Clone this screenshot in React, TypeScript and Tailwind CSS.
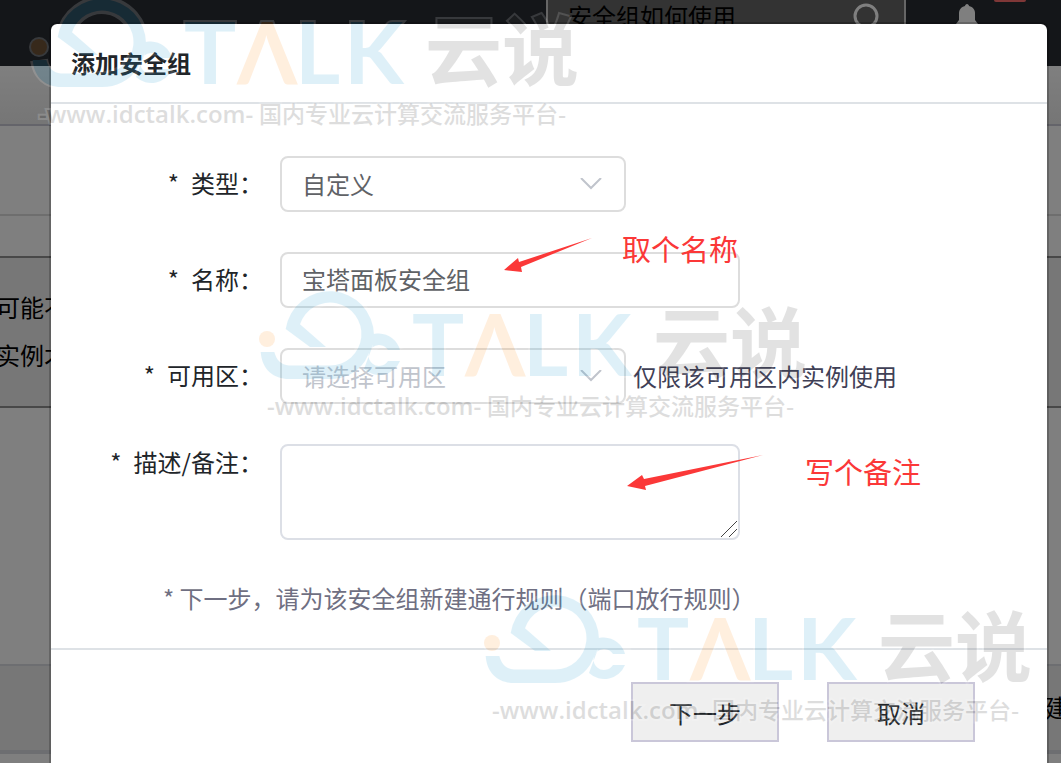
import { useState } from 'react'
import type { ReactNode } from 'react'

const FIELD = 'rounded-lg border-2 border-[#dddddd] bg-white text-2xl text-[#606266] outline-none'

function Watermark({ className }: { className: string }) {
  return (
    <svg
      aria-hidden="true"
      viewBox="0 0 560 140"
      className={`pointer-events-none absolute h-[140px] w-[560px] opacity-15 ${className}`}
    >
      {/* Cloud mark: white halo first, colour on top */}
      <g fill="none" stroke="#ffffff">
        <path d="M12 67C14 80 22 87 34 87H75A37.500 37.500 0 1 0 38 43" strokeWidth="18" />
        <path d="M144 65A17 17 0 1 0 144 77" strokeWidth="17" />
        <circle cx="12" cy="54" r="8" strokeWidth="4" />
      </g>
      <path
        d="M5.700 67H19.300C21.500 75 26 80 34 80.500H75A31.500 31.500 0 1 0 45 39.300L71 62H55L30.700 44A44.400 44.400 0 0 1 119 50L118 60L110 76C102 88 89 94 75 94H34C19 94 7 85 5.700 67Z"
        fill="#2aa2d7"
      />
      <path
        d="M145 65A22.500 22.500 0 0 0 124 48.500C121 48.500 118.500 49 118 49L118 60L109 84A22.500 22.500 0 0 0 145 76H133A10.500 10.500 0 1 1 133 65Z"
        fill="#2aa2d7"
      />
      <circle cx="12" cy="54" r="8" fill="#ff9628" />

      <g stroke="#ffffff" strokeWidth="4" paintOrder="stroke">
        <g fontFamily="Lato, sans-serif" fontSize="87" fontWeight="700" fill="#2aa2d7">
          <text x="157" y="91">T</text>
          <text x="210" y="91" fill="#ff9628">Λ</text>
          <text x="268" y="91">L</text>
          <text x="317" y="91">K</text>
        </g>
        <text x="398" y="87" fontFamily="'Noto Sans CJK SC', sans-serif" fontSize="77" fontWeight="700" fill="#444444">
          云说
        </text>
        <g fontSize="23" fill="#222222">
          <text x="12" y="130" fontFamily="'Open Sans', sans-serif" fontSize="24" fontWeight="600">
            -www.idctalk.com-
          </text>
          <text x="232" y="130" fontFamily="'Noto Sans CJK SC', sans-serif" fontWeight="500">
            国内专业云计算交流服务平台-
          </text>
        </g>
      </g>
    </svg>
  )
}

function Row({ label, htmlFor, children }: { label: string; htmlFor: string; children: ReactNode }) {
  return (
    <div className="flex items-start gap-[17px]">
      <label htmlFor={htmlFor} className="flex h-[54px] w-[212px] shrink-0 items-center justify-end gap-3 text-[#212529]">
        <span>*</span>
        <span>{label}：</span>
      </label>
      {children}
    </div>
  )
}

function Chevron() {
  return (
    <svg
      viewBox="0 0 22 12"
      fill="none"
      stroke="#c0c4cc"
      strokeWidth="2"
      className="pointer-events-none absolute top-[22px] right-6 h-3 w-[22px]"
    >
      <path d="M1 0L11 10L21 0" />
    </svg>
  )
}

function PageBehind() {
  return (
    <div className="flex min-h-screen flex-col bg-white text-2xl text-black">
      <header className="flex h-[66px] items-start bg-[#282c32]">
        <div className="mr-12 ml-auto flex h-[66px] w-[360px] items-start justify-between border-x-2 border-[#cccccc] bg-[#666666] pr-6 pl-5">
          <span className="leading-[34px]">安全组如何使用</span>
          <svg viewBox="0 0 28 36" fill="none" stroke="#ffffff" strokeWidth="3" className="h-9 w-7">
            <circle cx="14" cy="16" r="11" />
            <path d="M21 25L27 33" />
          </svg>
        </div>
        <svg viewBox="0 0 26 32" fill="#ffffff" className="h-8 w-[26px]">
          <path d="M13 4C14 4 15 5 15 6C19 7 21 10 21 13V20L24 24V26H2V24L5 20V13C5 10 7 7 11 6C11 5 12 4 13 4Z" />
        </svg>
        <span className="mr-[35px] ml-[14px] h-0.5 w-8 rounded-b-full bg-[#ff6f6f]" />
      </header>
      <div className="h-[60px] border-b-2 border-[#c8c8d4] bg-linear-to-b from-white to-[#ececec]" />
      <div className="h-[90px] border-b-2 border-[#dcdcdc]" />
      <div className="h-10" />
      <div className="-ml-1 h-[152px] border-y-2 border-[#909090] bg-[#eeeeee] pt-[26px] leading-[48px]">
        <p>可能不</p>
        <p>实例才</p>
      </div>
      <div className="h-64" />
      <div className="flex h-[90px] items-center justify-end overflow-hidden border-t-2 border-b-4 border-[#dadce2] bg-[#eeeeee]">
        <span className="-mr-2">建</span>
      </div>
    </div>
  )
}

export default function App() {
  const [name, setName] = useState('宝塔面板安全组')
  const [remark, setRemark] = useState('')

  return (
    <div className="relative h-screen overflow-hidden font-['Open_Sans','Noto_Sans_CJK_SC',sans-serif]">
      <PageBehind />

      <div className="absolute inset-0 overflow-hidden bg-black/50 pt-[22px] pr-3 pl-[49px]">
        <section
          role="dialog"
          aria-labelledby="dialog-title"
          className="min-h-full rounded-lg border-2 border-black/20 bg-white bg-clip-padding font-['Noto_Sans_CJK_SC',sans-serif] text-2xl"
        >
          <div className="flex h-20 items-center border-b-2 border-[#dee2e6] px-5">
            <h1 id="dialog-title" className="font-bold text-[#212529]">添加安全组</h1>
          </div>

          <form>
            <div className="flex flex-col gap-10 pt-[52px]">
              <Row label="类型" htmlFor="type">
                <div className="relative w-[346px]">
                  <select id="type" className={`h-14 w-full appearance-none px-5 ${FIELD}`}>
                    <option>自定义</option>
                  </select>
                  <Chevron />
                </div>
              </Row>

              <Row label="名称" htmlFor="name">
                <div className="relative w-[460px]">
                  <input
                    id="name"
                    value={name}
                    onChange={(e) => setName(e.target.value)}
                    className={`h-14 w-full px-5 pb-1 ${FIELD}`}
                  />
                  <svg viewBox="0 0 90 36" fill="#fb3838" className="pointer-events-none absolute -top-4 left-56 h-9 w-[90px]">
                    <path d="M0 34L14 22L15 26L88 2L17 31L18 36Z" />
                  </svg>
                  <span className="pointer-events-none absolute -top-[26px] left-[342px] text-[29px] leading-[44px] whitespace-nowrap text-[#fb3838]">
                    取个名称
                  </span>
                </div>
              </Row>

              <Row label="可用区" htmlFor="zone">
                <div className="flex items-center gap-[7px]">
                  <div className="relative w-[346px]">
                    <select id="zone" className={`h-14 w-full appearance-none px-5 ${FIELD} text-[#c0c4cc]!`}>
                      <option>请选择可用区</option>
                    </select>
                    <Chevron />
                  </div>
                  <span className="text-[#3f4056]">仅限该可用区内实例使用</span>
                </div>
              </Row>

              <div className="flex items-start gap-[17px]">
                <label htmlFor="remark" className="flex h-9 w-[212px] shrink-0 items-center justify-end gap-3 text-[#212529]">
                  <span>*</span>
                  <span>描述/备注：</span>
                </label>
                <div className="relative h-24 w-[460px]">
                  <textarea
                    id="remark"
                    value={remark}
                    onChange={(e) => setRemark(e.target.value)}
                    className="block h-24 w-full resize-none rounded-lg border-2 border-[#dcdfe6] bg-white px-5 py-2 text-2xl text-[#606266] outline-none"
                  />
                  <svg viewBox="0 0 16 16" stroke="#444444" strokeWidth="1" className="pointer-events-none absolute right-[3px] bottom-[3px] size-4">
                    <path d="M0 16L16 0M8 16L16 8" />
                  </svg>
                  <svg viewBox="0 0 136 36" fill="#fb3838" className="pointer-events-none absolute top-[11px] left-[347px] h-9 w-[136px]">
                    <path d="M0 31L15 20L17 24L136 0L18 31L19 35Z" />
                  </svg>
                  <span className="pointer-events-none absolute top-[5px] left-[525px] text-[29px] leading-[44px] whitespace-nowrap text-[#fb3838]">
                    写个备注
                  </span>
                </div>
              </div>
            </div>

            <p className="mt-10 pb-8 pl-28 leading-9 text-[#6f6f82]">* 下一步，请为该安全组新建通行规则（端口放行规则）</p>

            <div className="flex justify-end gap-12 border-t-2 border-[#dee2e6] pt-8 pr-[72px] pb-10 text-[#212529]">
              <button type="button" className="h-[60px] w-[148px] border-2 border-[#cac7d9] bg-[#efefef] pt-0.5">下一步</button>
              <button type="button" className="h-[60px] w-[148px] border-2 border-[#cac7d9] bg-[#efefef] pt-0.5">取消</button>
            </div>
          </form>
        </section>
      </div>

      <Watermark className="-top-[7px] left-[27px]" />
      <Watermark className="top-[285px] left-[255px]" />
      <Watermark className="top-[589px] left-[480px]" />
    </div>
  )
}
